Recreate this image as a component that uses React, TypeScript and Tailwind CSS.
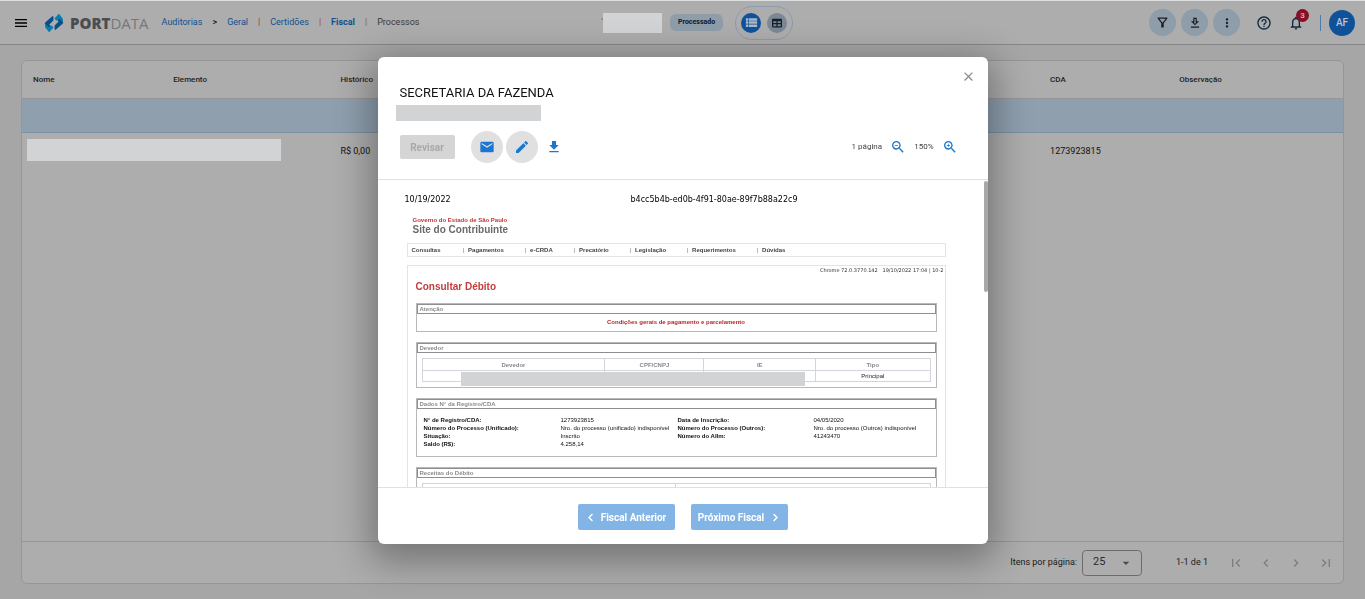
import type { ReactNode } from "react";
import {
  MdChevronLeft,
  MdChevronRight,
  MdClose,
  MdDownload,
  MdEdit,
  MdFirstPage,
  MdLastPage,
  MdMail,
  MdMenu,
  MdMoreVert,
  MdArrowDropDown,
  MdOutlineFilterAlt,
  MdOutlineHelpOutline,
  MdOutlineNotifications,
  MdOutlineZoomIn,
  MdOutlineZoomOut,
  MdViewList,
} from "react-icons/md";
import { FaChevronLeft, FaChevronRight, FaTable } from "react-icons/fa";

function Logo() {
  return (
    <a href="#inicio" aria-label="Portdata" className="flex items-center gap-[6px]">
      <svg viewBox="0 0 20 20" className="size-5" aria-hidden="true">
        <path d="M8.6 3 1.4 9.2Q.2 10.4 1.2 11.6L4.6 15.2 6.6 13 5.4 11.4 9.4 7.6V3.4Z" fill="#0b4f88" />
        <path d="M1 10.8 4.8 14.2 7.2 12.2 9.6 14.6 5.6 18.8Q4.8 19.2 4.2 18.2L1.2 14.2Z" fill="#0a7bad" />
        <path d="M11.4 17 18.6 10.8Q19.8 9.6 18.8 8.4L15.4 4.8 13.4 7 14.6 8.6 10.6 12.4V16.6Z" fill="#0b4f88" />
        <path d="M19 9.2 15.2 5.8 12.8 7.8 10.4 5.4 14.4 1.2Q15.2.8 15.8 1.8L18.8 5.8Z" fill="#0a7bad" />
      </svg>
      <span className="font-['Open_Sans'] text-[15px] leading-5 text-[#77777c]">
        <b className="font-extrabold text-[#4c4d51]">PORT</b>DATA
      </span>
    </a>
  );
}

function DownloadOutline() {
  return (
    <svg viewBox="0 0 24 24" className="size-[14px]" fill="currentColor" aria-hidden="true">
      <path d="M19 9h-4V3H9v6H5l7 7 7-7zm-8 2V5h2v6h1.17L12 13.17 9.83 11H11zM5 18h14v2H5z" />
    </svg>
  );
}

function RoundButton({ label, children }: { label: string; children: ReactNode }) {
  return (
    <button aria-label={label} className="flex size-[27px] items-center justify-center rounded-full bg-[#8f9caa] text-[#1b1f24]">
      {children}
    </button>
  );
}

function Header() {
  return (
    <header className="flex h-[45px] items-center border-t border-b border-t-[#dcdedf] border-b-[#878787] bg-[#adadad] pr-[10px] pl-[13px]">
      <div className="flex flex-1 items-center">
        <button aria-label="Menu" className="mr-[15px] text-black">
          <MdMenu className="size-4" />
        </button>
        <Logo />
        <nav className="ml-[13px] flex items-center gap-[10px] pt-px text-[9px] text-[#10508f]">
          <a href="#auditorias">Auditorias</a>
          <span className="text-black">&gt;</span>
          <a href="#geral">Geral</a>
          <span className="text-[#8a3a2c]">|</span>
          <a href="#certidoes">Certidões</a>
          <span className="text-[#9a5020]">|</span>
          <a href="#fiscal" className="font-bold">Fiscal</a>
          <span className="text-[#8a5a20]">|</span>
          <a href="#processos" className="text-[#3c3c3c]">Processos</a>
        </nav>
      </div>
      <div className="flex items-center pl-[26px]">
        <span className="-mr-[3px] text-[9px] text-[#333]">1</span>
        <span className="relative mr-2 h-5 w-[59px] bg-[#d1d3d5]" />
        <span className="mr-3 rounded-md bg-[#8f9caa] px-[8px] text-[7px] leading-[17px] font-bold text-[#0d1a2a]">Processado</span>
        <div className="flex items-center gap-[6px] rounded-full border border-[#8d9bb0] px-[5px] py-[6px]">
          <button aria-label="Lista" className="flex size-5 items-center justify-center rounded-full bg-[#0f529a] text-[#adb8c6]">
            <MdViewList className="size-[15px]" />
          </button>
          <button aria-label="Tabela" className="flex size-5 items-center justify-center rounded-full bg-[#7c8896] text-[#14202e]">
            <FaTable className="size-[10px]" />
          </button>
        </div>
      </div>
      <div className="flex flex-1 items-center justify-end">
        <div className="flex gap-[5px]">
          <RoundButton label="Filtrar"><MdOutlineFilterAlt className="size-[15px]" /></RoundButton>
          <RoundButton label="Baixar"><DownloadOutline /></RoundButton>
          <RoundButton label="Mais"><MdMoreVert className="size-[14px]" /></RoundButton>
        </div>
        <button aria-label="Ajuda" className="ml-4 text-[#122840]"><MdOutlineHelpOutline className="size-4" /></button>
        <button aria-label="Notificações" className="relative ml-4 text-[#122840]">
          <MdOutlineNotifications className="size-4" />
          <span className="absolute -top-[6px] left-2 size-[13px] rounded-full bg-[#8a0d25] text-[8px] leading-[13px] font-bold text-[#c8b0b4]">3</span>
        </button>
        <span className="mr-2 ml-4 h-4 w-px bg-[#5379a5]" />
        <button className="size-[26px] rounded-full bg-[#10529a] text-[10px] font-medium text-[#bcc5cf]">AF</button>
      </div>
    </header>
  );
}

function AuditTable() {
  return (
    <section className="mx-[21px] mt-[15px] flex min-h-[524px] flex-col rounded-md border border-[#969696] bg-[#adadad]">
      <table className="w-full table-fixed text-left text-[9px]">
        <colgroup>
          <col className="w-[11%]" />
          <col className="w-[12.5%]" />
          <col className="w-[53.8%]" />
          <col className="w-[9.7%]" />
          <col />
        </colgroup>
        <thead>
          <tr className="h-[37px] border-b border-[#969696] text-[8px] text-[#222]">
            <th className="pt-[2px] pl-[11px] font-medium">Nome</th>
            <th className="pt-[2px] pl-[6px] font-medium">Elemento</th>
            <th className="pt-[2px] pl-[8px] font-medium">Histórico</th>
            <th className="pt-[2px] pl-[7px] font-medium">CDA</th>
            <th className="pt-[2px] pl-[8px] font-medium">Observação</th>
          </tr>
        </thead>
        <tbody>
          <tr className="h-[34px] border-b border-[#7790a4] bg-[#8f9fae]"><td colSpan={5} /></tr>
          <tr className="h-[36px] text-[#111]">
            <td colSpan={2} className="pl-[5px]"><div className="h-[22px] w-[254px] bg-[#d1d3d5]" /></td>
            <td className="pt-[2px] pl-[8px]">R$ 0,00</td>
            <td className="pt-[2px] pl-[7px]">1273923815</td>
            <td />
          </tr>
        </tbody>
      </table>
      <footer className="mt-auto flex h-[42px] items-center justify-end border-t border-[#969696] pr-[9px] text-[9px] text-[#1c1c1c]">
        <label htmlFor="page-size" className="mr-[5px]">Itens por página:</label>
        <div className="relative mr-[34px] flex items-center">
          <select id="page-size" defaultValue="25" className="h-[26px] w-[60px] appearance-none rounded-sm border border-[#6d6d6d] px-[10px] text-[11px] text-[#2c2c2c]">
            <option>25</option>
            <option>50</option>
          </select>
          <MdArrowDropDown className="pointer-events-none absolute right-2 size-4 text-[#4c4c4c]" />
        </div>
        <span className="mr-5">1-1 de 1</span>
        <div className="flex gap-[14px] text-[#7d7d7d]">
          <button aria-label="Primeira página"><MdFirstPage className="size-4" /></button>
          <button aria-label="Página anterior"><MdChevronLeft className="size-4" /></button>
          <button aria-label="Próxima página"><MdChevronRight className="size-4" /></button>
          <button aria-label="Última página"><MdLastPage className="size-4" /></button>
        </div>
      </footer>
    </section>
  );
}

const menu = [
  { label: "Consultas", width: "w-[51px]" },
  { label: "Pagamentos", width: "w-[62px]" },
  { label: "e-CRDA", width: "w-[49px]" },
  { label: "Precatório", width: "w-[56px]" },
  { label: "Legislação", width: "w-[57px]" },
  { label: "Requerimentos", width: "w-[70px]" },
  { label: "Dúvidas", width: "w-[60px]" },
];

const registry = [
  ["N° de Registro/CDA:", "1273923815", "Data de Inscrição:", "04/05/2020"],
  ["Número do Processo (Unificado):", "Nro. do processo (unificado) indisponível", "Número do Processo (Outros):", "Nro. do processo (Outros) indisponível"],
  ["Situação:", "Inscrito", "Número do AIIm:", "41243470"],
  ["Saldo (R$):", "4.258,14", "", ""],
];

function Panel({ title, children }: { title: string; children: ReactNode }) {
  return (
    <section className="mb-[10px] border border-[#b8b8b8]">
      <h4 className="border border-[#8e8e8e] pl-[2px] text-[6px] leading-[8px] font-bold text-[#8c8c8c]">{title}</h4>
      {children}
    </section>
  );
}

function DebtDocument() {
  return (
    <article className="pt-[15px] pr-[42px] pl-[27px] font-['Liberation_Sans',sans-serif]">
      <div className="grid grid-cols-[226px_1fr] font-['DejaVu_Sans',sans-serif] text-[8px] leading-[10px] text-black">
        <span>10/19/2022</span>
        <span>b4cc5b4b-ed0b-4f91-80ae-89f7b88a22c9</span>
      </div>
      <div className="mt-[11px] ml-2 font-bold">
        <p className="text-[6px] leading-[8px] text-[#c03434]">Governo do Estado de São Paulo</p>
        <p className="text-[10px] leading-[12px] text-[#6a6a6a]">Site do Contribuinte</p>
      </div>
      <nav className="mt-[7px] ml-[2px] flex h-[14px] items-center border border-[#e4e4e4] pl-1 text-[6px] font-bold text-[#444]">
        {menu.map((item, i) => (
          <a key={item.label} href="#menu" className={item.width}>
            {i > 0 && <span className="mr-1 font-normal text-[#777]">|</span>}
            {item.label}
          </a>
        ))}
      </nav>
      <div className="mt-2 ml-[2px] border border-[#e4e4e4] px-2">
        <p className="-mr-[7px] text-right font-['DejaVu_Sans',sans-serif] text-[5px] leading-[9px] text-[#333]">
          Chrome 72.0.3770.142 &nbsp; 19/10/2022 17:04 | 10-2
        </p>
        <h3 className="mt-[6px] mb-[10px] text-[10px] leading-[12px] font-bold text-[#c43c3c]">Consultar Débito</h3>
        <Panel title="Atenção">
          <p className="text-center text-[6px] leading-[17px] font-bold text-[#b82828]">Condições gerais de pagamento e parcelamento</p>
        </Panel>
        <Panel title="Devedor">
          <div className="relative p-[5px]">
            <table className="w-full table-fixed border-collapse text-center text-[6px] leading-[8px]">
              <colgroup>
                <col className="w-[36%]" />
                <col className="w-[19.5%]" />
                <col className="w-[22%]" />
                <col />
              </colgroup>
              <thead>
                <tr className="h-[12px] text-[#888]">
                  {["Devedor", "CPF/CNPJ", "IE", "Tipo"].map((h) => (
                    <th key={h} className="border border-[#d2d6dc]">{h}</th>
                  ))}
                </tr>
              </thead>
              <tbody>
                <tr className="h-[11px] text-[#222]">
                  <td className="border border-[#d2d6dc]" />
                  <td className="border border-[#d2d6dc]" />
                  <td className="border border-[#d2d6dc]" />
                  <td className="border border-[#d2d6dc]">Principal</td>
                </tr>
              </tbody>
            </table>
            <div className="absolute top-[19px] left-[44px] h-[14px] w-[344px] bg-[#d1d3d5]" />
          </div>
        </Panel>
        <Panel title="Dados N° da Registro/CDA">
          <table className="mt-[7px] mb-2 ml-[7px] table-fixed text-left text-[6px] leading-[8px] text-[#111]">
            <colgroup>
              <col className="w-[137px]" />
              <col className="w-[117px]" />
              <col className="w-[136px]" />
              <col className="w-[120px]" />
            </colgroup>
            <tbody>
              {registry.map((row) => (
                <tr key={row[0]} className="whitespace-nowrap">
                  <th className="font-bold">{row[0]}</th>
                  <td>{row[1]}</td>
                  <th className="font-bold">{row[2]}</th>
                  <td>{row[3]}</td>
                </tr>
              ))}
            </tbody>
          </table>
        </Panel>
        <Panel title="Receitas do Débito">
          <div className="mx-[5px] mt-[5px] grid h-10 grid-cols-2 divide-x divide-[#d2d6dc] border border-[#d2d6dc]">
            <span />
            <span />
          </div>
        </Panel>
      </div>
    </article>
  );
}

function Dialog() {
  return (
    <div className="fixed inset-0 flex items-center justify-center pt-[2px]">
      <div role="dialog" aria-label="Secretaria da Fazenda" className="w-[610px] overflow-hidden rounded-md bg-white shadow-[0_10px_36px_8px_rgba(0,0,0,0.32)]">
        <div className="h-[123px] border-b border-[#e0e0e0] pt-[10px] pr-3 pl-[22px]">
          <div className="flex h-[18px] justify-end">
            <button aria-label="Fechar" className="text-[#8c8c8c]"><MdClose className="size-[15px]" /></button>
          </div>
          <h2 className="text-[13px] leading-[16px] text-[#111]">SECRETARIA DA FAZENDA</h2>
          <div className="-ml-1 mt-1 h-4 w-[145px] bg-[#d1d3d5]" />
          <div className="mt-[10px] flex items-center">
            <button disabled className="h-6 w-[55px] rounded-xs bg-[#d5d5d5] text-[10px] font-bold text-[#a9a9a9]">Revisar</button>
            <button aria-label="Enviar e-mail" className="ml-4 flex size-8 items-center justify-center rounded-full bg-[#e0e0e0] text-[#1976d2]"><MdMail className="size-4" /></button>
            <button aria-label="Editar" className="ml-[3px] flex size-8 items-center justify-center rounded-full bg-[#e0e0e0] text-[#1976d2]"><MdEdit className="size-4" /></button>
            <button aria-label="Baixar documento" className="ml-2 text-[#1976d2]"><MdDownload className="size-4" /></button>
            <div className="mr-[18px] ml-auto flex items-center gap-2 text-[8px] text-[#444]">
              <span>1 página</span>
              <button aria-label="Diminuir zoom" className="text-[#1976d2]"><MdOutlineZoomOut className="size-4" /></button>
              <span>150%</span>
              <button aria-label="Aumentar zoom" className="text-[#1976d2]"><MdOutlineZoomIn className="size-4" /></button>
            </div>
          </div>
        </div>
        <div className="relative h-[307px] overflow-hidden">
          <DebtDocument />
          <div className="absolute top-px right-0 h-[111px] w-1 rounded-full bg-[#a8a8a8]" />
        </div>
        <footer className="flex h-[57px] items-center justify-center gap-4 border-t border-[#e0e0e0] pt-[2px] text-[10px] font-bold text-white">
          <button className="flex h-[26px] w-[97px] items-center justify-center gap-[6px] rounded-xs bg-[#83b4e6]">
            <FaChevronLeft className="size-[9px]" />
            Fiscal Anterior
          </button>
          <button className="flex h-[26px] w-[97px] items-center justify-center gap-[7px] rounded-xs bg-[#83b4e6]">
            Próximo Fiscal
            <FaChevronRight className="size-[9px]" />
          </button>
        </footer>
      </div>
    </div>
  );
}

export default function App() {
  return (
    <div className="min-h-screen bg-[#a6a6a6] font-['Roboto',sans-serif]">
      <Header />
      <AuditTable />
      <Dialog />
    </div>
  );
}
